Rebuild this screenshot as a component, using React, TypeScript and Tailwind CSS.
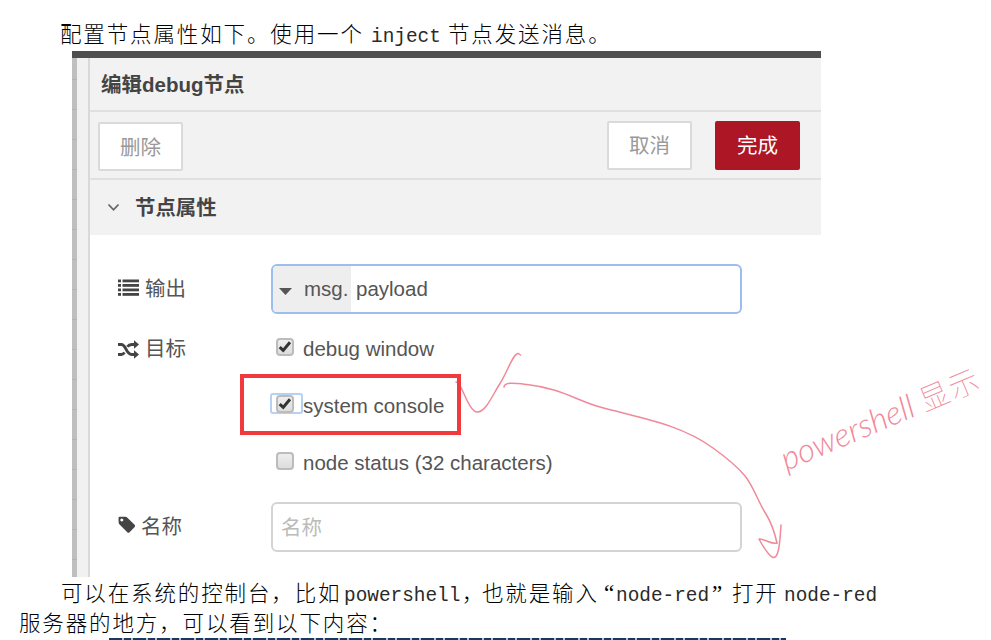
import type { ReactNode } from "react";

const cjk = "font-['Liberation_Sans','Noto_Sans_CJK_SC',sans-serif]";

// A run of document text with a fixed width, so mixed scripts keep the typeset spacing.
function Han({ w, children }: { w: string; children: ReactNode }) {
  return (
    <span className={`${w} shrink-0 whitespace-nowrap font-['Noto_Sans_CJK_SC',sans-serif] text-[21.5px] font-light tracking-[1.87px]`}>
      {children}
    </span>
  );
}

function Latin({ w, children }: { w: string; children: ReactNode }) {
  return (
    <span className={`${w} shrink-0 whitespace-nowrap font-['Liberation_Mono',monospace] text-[19.4px] text-[#2a2a2a]`}>
      {children}
    </span>
  );
}

function Quote({ w, children }: { w: string; children: ReactNode }) {
  return <span className={`${w} shrink-0 font-['Liberation_Serif',serif] text-[23px]`}>{children}</span>;
}

function Check({ checked = false, focused = false }: { checked?: boolean; focused?: boolean }) {
  return (
    <span
      className={`flex h-[21px] w-[33px] shrink-0 items-center rounded-[3px] border-2 pl-1 ${focused ? "border-[#b4d2f2]" : "border-transparent"}`}
    >
      <span className="flex size-[18px] items-center justify-center rounded-[4px] border-2 border-[#bcbcbc] bg-linear-to-b from-[#eeeeee] to-[#dddddd]">
        {checked && (
          <svg viewBox="0 0 14 14" className="size-[14px] shrink-0" fill="none" stroke="#333" strokeWidth="3">
            <path d="M1.7 7.2 5.2 10.4 12 2.2" />
          </svg>
        )}
      </span>
    </span>
  );
}

function CheckRow({ label, checked, focused }: { label: string; checked?: boolean; focused?: boolean }) {
  return (
    <div className="flex h-[57px] items-center">
      <div className="pb-1">
        <Check checked={checked} focused={focused} />
      </div>
      <span className="pt-[2px] text-[20.5px] whitespace-nowrap">{label}</span>
    </div>
  );
}

function ListIcon() {
  return (
    <svg width="21" height="17" viewBox="0 0 21 17" className="-mt-1" fill="#444">
      {[0.5, 5, 9.5, 14].map((y) => (
        <g key={y}>
          <rect x="0" y={y} width="3" height="2.8" />
          <rect x="4.5" y={y} width="16.5" height="2.8" />
        </g>
      ))}
    </svg>
  );
}

function ShuffleIcon() {
  return (
    <svg width="21" height="19" viewBox="0 0 21 19" fill="none" stroke="#444" strokeWidth="2.9">
      <path d="M0 4.5h3.2c2.2 0 3.3 1.5 4.8 4.7 1.7 3.7 3.1 5.3 5.8 5.3H17" />
      <path d="M0 14.5h3.2c1.5 0 2.5-.8 3.4-2M9.4 6.8c1.1-1.6 2.3-2.3 4.4-2.3H17" />
      <path d="M16 0.2 21 4.5 16 8.8ZM16 10.2 21 14.5 16 18.8Z" fill="#444" stroke="none" />
    </svg>
  );
}

function TagIcon() {
  return (
    <svg width="18" height="18" viewBox="0 0 19 19" className="-mt-1" fill="#444">
      <path
        fillRule="evenodd"
        d="M0.5 2.3Q.5.8 2 .8L7.6.9Q9 1 10.2 2.1L17.5 9.3Q18.7 10.4 17.6 11.6L12 17.3Q10.9 18.3 9.8 17.2L1.9 9.3Q.8 8.2.7 6.9ZM4 2.6a1.6 1.6 0 1 0 .01 0Z"
      />
    </svg>
  );
}

function Label({ icon, children }: { icon: ReactNode; children: ReactNode }) {
  return (
    <div className="flex w-[152px] shrink-0 items-center gap-[6px] text-[20.5px]">
      {icon}
      <span>{children}</span>
    </div>
  );
}

function Button({ primary, children }: { primary?: boolean; children: ReactNode }) {
  return (
    <button
      className={`flex h-[49px] w-[85px] items-center justify-center rounded-[2px] border-2 pt-[3px] text-[20.5px] ${primary ? "border-[#ad1625] bg-[#ad1625] text-white" : "border-[#dadada] bg-white text-[#999]"}`}
    >
      {children}
    </button>
  );
}

function EditPanel() {
  return (
    <div className={`flex h-[526px] w-[749px] flex-col bg-white text-[#555] ${cjk}`}>
      <div className="h-[7px] shrink-0 bg-[#4f4f4f]" />
      <div className="flex flex-1">
        <div className="w-[5px] bg-[repeating-linear-gradient(to_bottom,#bfbfbf_0px,#bfbfbf_21px,#b3b3b3_21px,#b3b3b3_22px,#bfbfbf_22px,#bfbfbf_30px)]" />
        <div className="w-[13px] border-r-2 border-[#d9d9d9] bg-[#f1f1f1]" />
        <div className="flex flex-1 flex-col">
          <div className="flex h-[54px] items-center border-b-2 border-[#e0e0e0] bg-[#f2f2f2] pt-[2px] pl-[11px] text-[20.5px] font-bold text-[#444]">
            编辑debug节点
          </div>
          <div className="flex h-[68px] items-center justify-between border-b-2 border-[#e0e0e0] bg-[#f2f2f2] pr-[21px] pl-2">
            <div className="pt-[3px]">
              <Button>删除</Button>
            </div>
            <div className="flex gap-[23px]">
              <Button>取消</Button>
              <Button primary>完成</Button>
            </div>
          </div>
          <div className="flex h-[55px] items-center bg-[#f2f2f2] pl-[17px] text-[20.4px] font-bold text-[#444]">
            <svg width="13" height="9" viewBox="0 0 13 9" fill="none" stroke="#666" strokeWidth="1.8">
              <path d="M1.5 1.5 6.5 6.8 11.5 1.5" />
            </svg>
            <span className="pt-[2px] pl-[15px]">节点属性</span>
          </div>
          <div className="flex flex-col pt-[29px] pl-7">
            <div className="flex items-center">
              <Label icon={<ListIcon />}>输出</Label>
              <div className="ml-px flex h-[50px] w-[471px] overflow-hidden rounded-[6px] border-2 border-[#9dbdf0] text-[20.5px]">
                <div className="flex w-[78px] items-center bg-[#eeeeee] pl-[6px]">
                  <svg width="13" height="7" viewBox="0 0 13 7" className="mt-1" fill="#555">
                    <path d="M0 0H13L6.5 7Z" />
                  </svg>
                  <span className="pl-3">msg.</span>
                </div>
                <div className="flex items-center pl-[5px]">payload</div>
              </div>
            </div>
            <div className="flex pt-[6px]">
              <div className="flex h-[57px] items-center pt-[1px]">
                <Label icon={<ShuffleIcon />}>目标</Label>
              </div>
              <div>
                <CheckRow label="debug window" checked />
                <CheckRow label="system console" checked focused />
                <CheckRow label="node status (32 characters)" />
              </div>
            </div>
            <div className="flex items-center pt-[11px]">
              <Label icon={<TagIcon />}>
                <span className="-ml-px">名称</span>
              </Label>
              <div className="ml-px flex h-[50px] w-[471px] items-center rounded-[6px] border-2 border-[#d4d4d4] pt-[2px] pl-2 text-[20.5px] text-[#bbb]">
                名称
              </div>
            </div>
          </div>
        </div>
      </div>
    </div>
  );
}

function Ink() {
  return (
    <>
      <svg className="absolute inset-0 h-[640px] w-[991px]" viewBox="0 0 991 640" fill="none" stroke="#f0899a" strokeWidth="1.5" strokeLinecap="round" strokeLinejoin="round">
        <path d="M456 382C462 382 468 412 477.5 412C486 412 493 394 500 383.5C508 371 513 353 518.5 353.5L520.5 355" />
        <path d="M504 387C505 382 513 383 527 384.5C560 388 578 401 600 407C640 418 680 424 713 448C727 458 736 465 745 476C754 487 758 502 766 514C772 524 775 534 777 543" />
        <path d="M777 543C772 545 766 539 759 539C761 543 768 555 773 557.5C779 559 780 541 781 525" />
      </svg>
      <div className="absolute top-[374px] left-[240px] h-[61px] w-[221px] border-4 border-[#f03a3e]" />
      <div className="absolute top-[438px] left-[786px] flex origin-[0_80%] -rotate-[23deg] items-baseline whitespace-nowrap text-[#f0899a]">
        <span className="font-['Lato',sans-serif] text-[33px] leading-10 font-light italic">powershell</span>
        <span className="pl-2 font-['Noto_Sans_CJK_SC',sans-serif] text-[30px] leading-10 font-thin tracking-[2px]">显示</span>
      </div>
    </>
  );
}

export default function App() {
  return (
    <main className="relative flex h-[640px] w-[991px] flex-col overflow-hidden bg-white text-black">
      <p className="flex h-[51px] items-baseline pt-[17px] pl-[60px] leading-8">
        <Han w="w-[311px]">配置节点属性如下。使用一个</Han>
        <Latin w="w-[77px]">inject</Latin>
        <Han w="w-[170px]">节点发送消息。</Han>
      </p>
      <div className="pl-[72px]">
        <EditPanel />
      </div>
      <div className="-mt-px flex h-[62px] flex-col">
        <p className="flex h-[30px] items-baseline pl-[61px] leading-8">
          <Han w="w-[283px]">可以在系统的控制台，比如</Han>
          <Latin w="w-[118px]">powershell</Latin>
          <Han w="w-[20px]">，</Han>
          <Han w="w-[122px]">也就是输入</Han>
          <Quote w="w-[12px]">“</Quote>
          <Latin w="w-[96px]">node-red</Latin>
          <Quote w="w-[20px]">”</Quote>
          <Han w="w-[52px]">打开</Han>
          <Latin w="w-[95px]">node-red</Latin>
        </p>
        <p className="flex h-[31px] items-baseline pl-[19px] leading-8">
          <Han w="w-[380px]">服务器的地方，可以看到以下内容：</Han>
        </p>
      </div>
      <div className="ml-[109px] h-[2px] w-[677px] bg-[repeating-linear-gradient(to_right,#183860_0px,#183860_13px,#b5c2d3_13px,#b5c2d3_15px,#183860_15px,#183860_22px,#b5c2d3_22px,#b5c2d3_24px)]" />
      <Ink />
    </main>
  );
}
